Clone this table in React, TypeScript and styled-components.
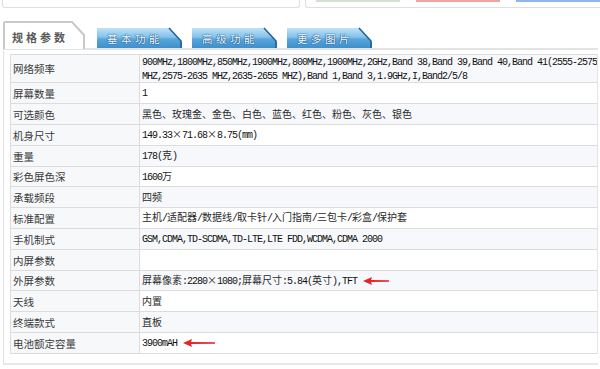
import React from "react";
import styled, { createGlobalStyle } from "styled-components";

const GlobalStyle = createGlobalStyle`
  html, body {
    margin: 0;
    padding: 0;
    background: #fff;
  }
  body {
    font-family: "Noto Sans CJK SC", sans-serif;
    color: #333;
  }
`;

const specs: { label: string; lines: string[]; arrow?: number }[] = [
  {
    label: "网络频率",
    lines: [
      "900MHz,1800MHz,850MHz,1900MHz,800MHz,1900MHz,2GHz,Band 38,Band 39,Band 40,Band 41(2555-2575",
      "MHZ,2575-2635 MHZ,2635-2655 MHZ),Band 1,Band 3,1.9GHz,I,Band2/5/8",
    ],
  },
  { label: "屏幕数量", lines: ["1"] },
  { label: "可选颜色", lines: ["黑色、玫瑰金、金色、白色、蓝色、红色、粉色、灰色、银色"] },
  { label: "机身尺寸", lines: ["149.33×71.68×8.75(mm)"] },
  { label: "重量", lines: ["178(克)"] },
  { label: "彩色屏色深", lines: ["1600万"] },
  { label: "承载频段", lines: ["四频"] },
  { label: "标准配置", lines: ["主机/适配器/数据线/取卡针/入门指南/三包卡/彩盒/保护套"] },
  { label: "手机制式", lines: ["GSM,CDMA,TD-SCDMA,TD-LTE,LTE FDD,WCDMA,CDMA 2000"] },
  { label: "内屏参数", lines: [""] },
  { label: "外屏参数", lines: ["屏幕像素:2280×1080;屏幕尺寸:5.84(英寸),TFT"], arrow: 26 },
  { label: "天线", lines: ["内置"] },
  { label: "终端款式", lines: ["直板"] },
  { label: "电池额定容量", lines: ["3900mAH"], arrow: 32 },
];

const Page = styled.div`
  width: 600px;
  height: 369px;
  overflow: hidden;
`;

const TopStrip = styled.div`
  display: flex;
  height: 8px;
  padding-left: 2px;
  box-sizing: border-box;
`;

const TopBox = styled.div<{ $w?: number }>`
  ${(p) => (p.$w ? `width: ${p.$w}px;` : "flex: 1;")}
  box-sizing: border-box;
  border: 1px solid #dedede;
  border-top: none;
  border-radius: 0 0 3px 3px;
  margin-right: 5px;
  display: flex;
  gap: 16px;
  padding-left: 10px;
  &:last-child {
    margin-right: 0;
    border-right: none;
    border-radius: 0 0 0 3px;
  }
`;

const ColorBar = styled.div<{ $c: string }>`
  width: 84px;
  height: 2px;
  background: ${(p) => p.$c};
`;

const TabRow = styled.div`
  display: flex;
  align-items: flex-end;
  height: 27px;
  margin-top: 13px;
  padding-left: 3px;
`;

const ActiveTab = styled.div`
  position: relative;
  width: 83px;
  height: 28px;
  margin-right: 11px;
  margin-bottom: -1px;
  display: flex;
  align-items: center;
  padding-left: 9px;
  padding-top: 4px;
  box-sizing: border-box;
  font-size: 11px;
  font-weight: 700;
  letter-spacing: 3px;
  color: #5a5a5a;
  z-index: 1;
  span {
    position: relative;
  }
`;

const BlueTab = styled.div`
  position: relative;
  width: 85px;
  height: 21px;
  margin-right: 10px;
  display: flex;
  align-items: center;
  padding-left: 10px;
  padding-top: 2px;
  box-sizing: border-box;
  font-size: 10.5px;
  letter-spacing: 3.5px;
  color: #f4fbff;
  text-shadow: 0 0 1px #1a5a94, 0 0 1px #1a5a94, 0 0 1px #1a5a94;
  span {
    position: relative;
  }
`;

const TabShape = styled.svg`
  position: absolute;
  left: 0;
  top: 0;
`;

const Panel = styled.div`
  margin-left: 3px;
  margin-right: 2px;
  border-top: 2px solid #e4e4e4;
  border-left: 1px solid #e2e2e2;
  border-bottom: 2px solid #e8e8e8;
  padding: 4px 0 9px 6px;
`;

const Table = styled.div`
  display: grid;
  grid-template-columns: 129px 1fr;
  border-top: 1px solid #dcdcdc;
  border-left: 1px solid #dcdcdc;
  border-right: 1px solid #e4e4e4;
`;

const LabelCell = styled.div<{ $h: number }>`
  height: ${(p) => p.$h}px;
  display: flex;
  align-items: center;
  padding-left: 2px;
  background: #f7f8fa;
  border-right: 1px solid #dcdcdc;
  border-bottom: 1px solid #dcdcdc;
  font-size: 10.5px;
  color: #3a3a3a;
`;

const ValueCell = styled.div<{ $h: number; $shade?: boolean }>`
  height: ${(p) => p.$h}px;
  display: flex;
  align-items: center;
  gap: 6px;
  padding-left: 2px;
  background: ${(p) => (p.$shade ? "#f7f8fb" : "#fff")};
  border-bottom: 1px solid #dcdcdc;
  font-size: 10px;
  color: #2a2a2a;
  overflow: hidden;
  white-space: nowrap;
`;

const Lines = styled.div`
  display: flex;
  flex-direction: column;
  line-height: 12px;
`;

const Latin = styled.span`
  font-family: "Liberation Mono", monospace;
  font-size: 10px;
  letter-spacing: -1px;
  color: #111;
`;

const splitRuns = (text: string) =>
  text.split(/([\x20-\x7e]+)/).map((part, i) =>
    /^[\x20-\x7e]+$/.test(part) ? <Latin key={i}>{part}</Latin> : <span key={i}>{part}</span>
  );

const Arrow: React.FC<{ w: number }> = ({ w }) => (
  <svg width={w} height="10" viewBox={`0 0 ${w} 10`}>
    <path d={`M0 5 L9 1 L8 4 L${w} 4.3 L${w} 5.7 L8 6 L9 9 Z`} fill="#e5252a" />
  </svg>
);

const tabs = ["基本功能", "高级功能", "更多图片"];

export default function App() {
  return (
    <Page>
      <GlobalStyle />
      <TopStrip>
        <TopBox $w={327} />
        <TopBox>
          <ColorBar $c="#cfe3cf" />
          <ColorBar $c="#f0a3a3" />
          <ColorBar $c="#8fb6f2" />
        </TopBox>
      </TopStrip>

      <TabRow>
        <ActiveTab>
          <TabShape width="83" height="28" viewBox="0 0 83 28">
            <path d="M1 28 V2 Q1 1 2 1 H69 L81 14 V28" fill="#fff" stroke="#c9c9c9" strokeWidth="2" />
          </TabShape>
          <span>规格参数</span>
        </ActiveTab>
        {tabs.map((t, i) => (
          <BlueTab key={t}>
            <TabShape width="85" height="21" viewBox="0 0 85 21">
              <defs>
                <linearGradient id={`tab-grad-${i}`} x1="0" y1="0" x2="0" y2="1">
                  <stop offset="0" stopColor="#bfe2f7" />
                  <stop offset="0.45" stopColor="#86c2ea" />
                  <stop offset="0.55" stopColor="#5aa6da" />
                  <stop offset="1" stopColor="#3f8fcb" />
                </linearGradient>
              </defs>
              <path d="M0 21 V1 H72 L85 15 V21 Z" fill={`url(#tab-grad-${i})`} />
              <path d="M72 1 L84 14 V21" fill="none" stroke="#1f5f98" strokeWidth="1.5" />
            </TabShape>
            <span>{t}</span>
          </BlueTab>
        ))}
      </TabRow>

      <Panel>
        <Table>
          {specs.map((s, i) => {
            const h = i === 0 ? 27 : i % 5 === 0 ? 19 : 20;
            return (
              <React.Fragment key={s.label}>
                <LabelCell $h={h}>{s.label}</LabelCell>
                <ValueCell $h={h} $shade={i % 2 === 0}>
                  <Lines>
                    {s.lines.map((l, j) => (
                      <div key={j}>{splitRuns(l)}</div>
                    ))}
                  </Lines>
                  {s.arrow && <Arrow w={s.arrow} />}
                </ValueCell>
              </React.Fragment>
            );
          })}
        </Table>
      </Panel>
    </Page>
  );
}
